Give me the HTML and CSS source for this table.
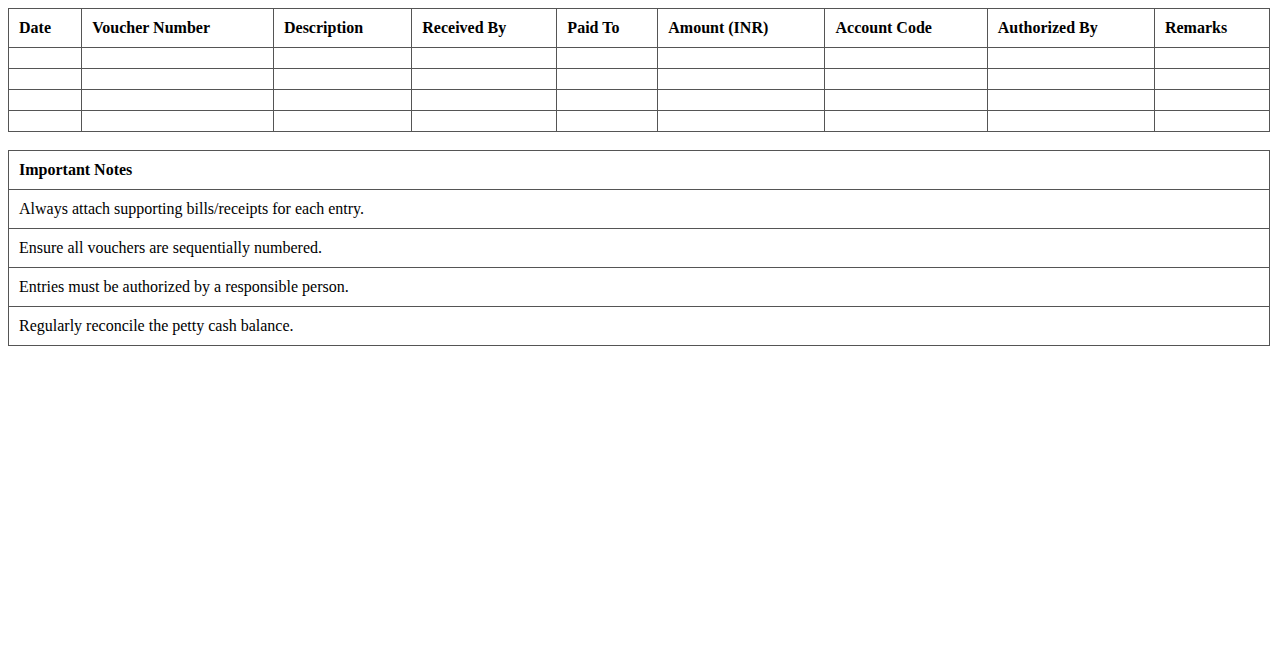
FILE: index.html
```html
<!DOCTYPE html>
<html>
<head>
<meta charset="utf-8">
<title>Petty Cash Register</title>
<link rel="stylesheet" href="styles.css">
</head>
<body>
<table class="register">
  <thead>
    <tr>
      <th>Date</th>
      <th>Voucher Number</th>
      <th>Description</th>
      <th>Received By</th>
      <th>Paid To</th>
      <th>Amount (INR)</th>
      <th>Account Code</th>
      <th>Authorized By</th>
      <th>Remarks</th>
    </tr>
  </thead>
  <tbody>
    <tr><td></td><td></td><td></td><td></td><td></td><td></td><td></td><td></td><td></td></tr>
    <tr><td></td><td></td><td></td><td></td><td></td><td></td><td></td><td></td><td></td></tr>
    <tr><td></td><td></td><td></td><td></td><td></td><td></td><td></td><td></td><td></td></tr>
    <tr><td></td><td></td><td></td><td></td><td></td><td></td><td></td><td></td><td></td></tr>
  </tbody>
</table>
<table class="notes">
  <tr><th>Important Notes</th></tr>
  <tr><td>Always attach supporting bills/receipts for each entry.</td></tr>
  <tr><td>Ensure all vouchers are sequentially numbered.</td></tr>
  <tr><td>Entries must be authorized by a responsible person.</td></tr>
  <tr><td>Regularly reconcile the petty cash balance.</td></tr>
</table>
</body>
</html>
```
FILE: styles.css
```css
body {
  margin: 8px;
  font-family: "Liberation Serif", "Times New Roman", serif;
  font-size: 16px;
  color: #000;
  background: #fff;
}
table {
  width: 100%;
  border-collapse: collapse;
}
th, td {
  border: 1px solid #555;
  padding: 10px;
  text-align: left;
}
th {
  font-weight: bold;
}
.register {
  margin-bottom: 18px;
}
```
